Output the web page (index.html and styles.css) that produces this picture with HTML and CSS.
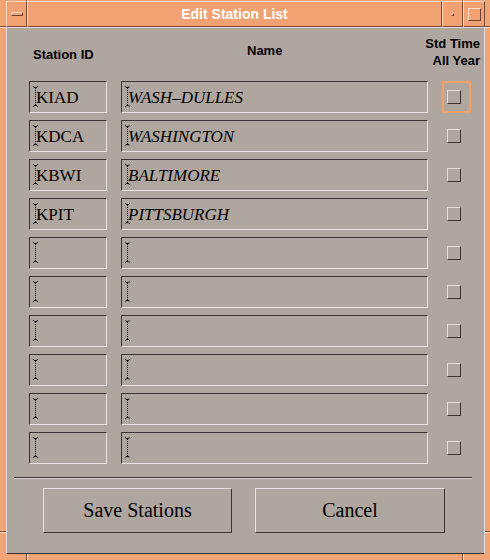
FILE: index.html
```html
<!DOCTYPE html>
<html lang="en">
<head>
  <meta charset="UTF-8" />
  <title>Edit Station List</title>
  <link rel="stylesheet" href="styles.css">
</head>
<body>
  <div class="window">
    <div class="titlebar">
      <div class="tb-btn tb-menu"><span class="menu-bar"></span></div>
      <div class="tb-title">Edit Station List</div>
      <div class="tb-btn tb-min"><span class="min-dot"></span></div>
      <div class="tb-btn tb-max"><span class="max-box"></span></div>
    </div>

    <div class="client">
      <div class="grid header">
        <div class="hd hd-id">Station ID</div>
        <div class="hd hd-name">Name</div>
        <div class="hd hd-std">Std Time<br>All Year</div>
      </div>

      <div class="grid rows" id="rows"></div>

      <div class="separator"></div>

      <div class="buttons">
        <button class="push-btn">Save Stations</button>
        <button class="push-btn">Cancel</button>
      </div>
    </div>
  </div>

  <script>
    // station rows, empty ones are left blank
    const stations = [
      ['KIAD', 'WASH\u2013DULLES'],
      ['KDCA', 'WASHINGTON'],
      ['KBWI', 'BALTIMORE'],
      ['KPIT', 'PITTSBURGH'],
    ];
    const ROW_COUNT = 10;
    const cursor = '<svg class="ibeam" width="5" height="21" viewBox="0 0 5 21">' +
      '<path d="M0 0.5h1M4 0.5h1M1 1.5h3M0 20.5h1M4 20.5h1M1 19.5h3" stroke="#000" stroke-width="1"/>' +
      '<path d="M2.5 2v17" stroke="#000" stroke-width="1" stroke-dasharray="1 1"/></svg>';

    const rows = document.getElementById('rows');
    for (let i = 0; i < ROW_COUNT; i++) {
      const s = stations[i] || ['', ''];
      rows.insertAdjacentHTML('beforeend',
        '<div class="field field-id">' + cursor + '<span class="val">' + s[0] + '</span></div>' +
        '<div class="field field-name">' + cursor + '<span class="val">' + s[1] + '</span></div>' +
        '<div class="check-cell' + (i === 0 ? ' focused' : '') + '"><span class="check"></span></div>');
    }
  </script>
</body>
</html>
```

FILE: styles.css
```css
/* Motif-ish dialog */
* {
  margin: 0;
  padding: 0;
  box-sizing: border-box;
}
body {
  background: #f1a475;
  width: 490px;
  height: 560px;
  overflow: hidden;
}
/* frame, with the resize-corner ticks drawn as lines in the background */
.window {
  width: 490px;
  height: 560px;
  background-color: #f1a577;
  background-image:
    linear-gradient(#7a4a34, #7a4a34),
    linear-gradient(#fbe0cf, #fbe0cf),
    linear-gradient(#7a4a34, #7a4a34),
    linear-gradient(#fbe0cf, #fbe0cf),
    linear-gradient(#7a4a34, #7a4a34),
    linear-gradient(#fbe0cf, #fbe0cf),
    linear-gradient(#7a4a34, #7a4a34),
    linear-gradient(#fbe0cf, #fbe0cf);
  background-size:
    1px 100%, 1px 100%, 1px 100%, 1px 100%,
    100% 1px, 100% 1px, 100% 1px, 100% 1px;
  background-position:
    26px 0, 27px 0, 462px 0, 463px 0,
    0 26px, 0 27px, 0 531px, 0 532px;
  background-repeat: no-repeat;
  padding: 1px 5px 6px 6px;
  display: flex;
  flex-direction: column;
}
/* Title bar */
.titlebar {
  display: flex;
  height: 26px;
  background: #f2a272;
}
.tb-btn,
.tb-title {
  border-top: 1px solid #f8d6c0;
  border-left: 1px solid #f8d6c0;
  border-right: 1px solid #7a4a34;
  border-bottom: 1px solid #7a4a34;
  display: flex;
  align-items: center;
  justify-content: center;
}
.tb-menu { width: 21px; flex: none; }
.tb-min { width: 21px; flex: none; }
.tb-max { width: 22px; flex: none; }
.tb-title {
  flex: 1;
  color: #fff;
  font-family: "Liberation Sans", Arial, sans-serif;
  font-weight: bold;
  font-size: 14px;
}
.menu-bar {
  width: 12px;
  height: 4px;
  border-top: 1px solid #fbe0cf;
  border-left: 1px solid #fbe0cf;
  border-right: 1px solid #6b4330;
  border-bottom: 1px solid #6b4330;
}
.min-dot {
  width: 3px;
  height: 3px;
  border-top: 1px solid #fbe0cf;
  border-left: 1px solid #fbe0cf;
  border-right: 1px solid #6b4330;
  border-bottom: 1px solid #6b4330;
}
.max-box {
  width: 13px;
  height: 13px;
  border-top: 1px solid #fbe0cf;
  border-left: 1px solid #fbe0cf;
  border-right: 1px solid #6b4330;
  border-bottom: 1px solid #6b4330;
}
/* Client area */
.client {
  flex: 1;
  background: #afa6a0;
  border-top: 1px solid #e6d8d8;
  border-left: 1px solid #e6d8d8;
  border-right: 1px solid #e6d8d8;
  border-bottom: 1px solid #3a3030;
  padding: 0 4px 0 22px;
  display: flex;
  flex-direction: column;
}
.grid {
  display: grid;
  grid-template-columns: 78px 307px 1fr;
  column-gap: 14px;
}
.header {
  height: 53px;
  font-family: "Liberation Sans", Arial, sans-serif;
  font-weight: bold;
  font-size: 13px;
  line-height: 17px;
  color: #000;
}
.hd-id {
  padding: 18px 0 0 4px;
  white-space: nowrap;
}
.hd-name {
  padding-top: 14px;
  padding-left: 126px;
}
.hd-std {
  padding-top: 7px;
  margin-left: -30px;
  text-align: right;
  white-space: nowrap;
}
.rows {
  grid-auto-rows: 32px;
  row-gap: 7px;
}
.field {
  border-top: 1px solid #3c3434;
  border-left: 1px solid #3c3434;
  border-right: 1px solid #ecdfe4;
  border-bottom: 1px solid #ecdfe4;
  display: flex;
  align-items: center;
  padding-left: 3px;
  font-family: "Liberation Serif", "Times New Roman", serif;
  font-size: 17px;
  color: #000;
}
.field-name .val {
  font-style: italic;
}
.ibeam {
  flex: none;
  margin-top: -1px;
}
.val {
  margin-left: -2px;
  padding-top: 1px;
}
.check-cell {
  width: 29px;
  display: flex;
  align-items: center;
  padding-left: 3px;
  border: 2px solid transparent;
}
.check-cell.focused {
  border-color: #f3a066;
}
.check {
  width: 14px;
  height: 14px;
  border-top: 1px solid #e8dce0;
  border-left: 1px solid #e8dce0;
  border-right: 1px solid #3c3434;
  border-bottom: 1px solid #3c3434;
  margin-top: -1px;
}
.separator {
  margin: 13px 8px 0 -15px;
  border-top: 1px solid #3c3434;
  border-bottom: 1px solid #e2d4d6;
}
.buttons {
  display: flex;
  gap: 23px;
  margin-top: 9px;
  padding-left: 14px;
}
.push-btn {
  height: 45px;
  width: 189px;
  background: #afa6a0;
  border-top: 1px solid #ecdfe4;
  border-left: 1px solid #ecdfe4;
  border-right: 1px solid #3c3434;
  border-bottom: 1px solid #3c3434;
  font-family: "Liberation Serif", "Times New Roman", serif;
  font-size: 20px;
  color: #000;
}
.push-btn + .push-btn {
  width: 190px;
}
```
